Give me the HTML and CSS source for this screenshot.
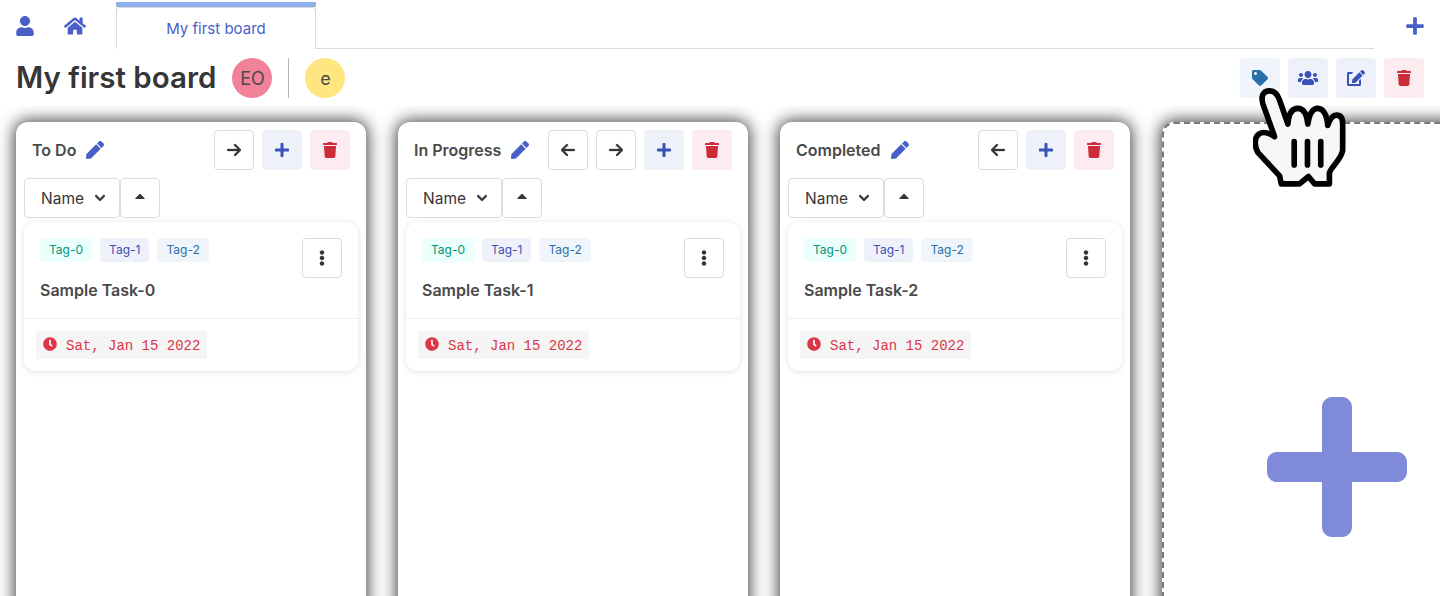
FILE: index.html
```html
<!DOCTYPE html>
<html lang="en">

<head>
    <meta charset="UTF-8">
    <meta name="viewport" content="width=device-width, initial-scale=1.0">
    <title>My first board</title>
    <link rel="stylesheet" href="styles.css">
</head>

<body>
    <svg class="defs" aria-hidden="true">
        <symbol id="i-user" viewBox="0 0 448 512"><path d="M224 256c70.7 0 128-57.3 128-128S294.7 0 224 0 96 57.3 96 128s57.3 128 128 128zm89.6 32h-16.7c-22.2 10.2-46.9 16-72.9 16s-50.6-5.8-72.9-16h-16.7C60.2 288 0 348.2 0 422.4V464c0 26.5 21.5 48 48 48h352c26.5 0 48-21.5 48-48v-41.6c0-74.2-60.2-134.4-134.4-134.4z"/></symbol>
        <symbol id="i-home" viewBox="0 0 576 512"><path d="M280.37 148.26L96 300.11V464a16 16 0 0 0 16 16l112.06-.29a16 16 0 0 0 15.92-16V368a16 16 0 0 1 16-16h64a16 16 0 0 1 16 16v95.64a16 16 0 0 0 16 16.05L464 480a16 16 0 0 0 16-16V300L295.67 148.26a12.19 12.19 0 0 0-15.3 0zM571.6 251.47L488 182.56V44.05a12 12 0 0 0-12-12h-56a12 12 0 0 0-12 12v72.61L318.47 43a48 48 0 0 0-61 0L4.34 251.47a12 12 0 0 0-1.6 16.9l25.5 31A12 12 0 0 0 45.15 301l235.22-193.74a12.19 12.19 0 0 1 15.3 0L530.9 301a12 12 0 0 0 16.9-1.6l25.5-31a12 12 0 0 0-1.7-16.93z"/></symbol>
        <symbol id="i-plus" viewBox="0 0 448 512"><path d="M416 208H272V64c0-17.67-14.33-32-32-32h-32c-17.67 0-32 14.33-32 32v144H32c-17.67 0-32 14.33-32 32v32c0 17.67 14.33 32 32 32h144v144c0 17.67 14.33 32 32 32h32c17.67 0 32-14.33 32-32V304h144c17.67 0 32-14.33 32-32v-32c0-17.67-14.33-32-32-32z"/></symbol>
        <symbol id="i-tag" viewBox="0 0 512 512"><path d="M0 252.118V48C0 21.49 21.49 0 48 0h204.118a48 48 0 0 1 33.941 14.059l211.882 211.882c18.745 18.745 18.745 49.137 0 67.882L293.823 497.941c-18.745 18.745-49.137 18.745-67.882 0L14.059 286.059A48 48 0 0 1 0 252.118zM112 64c-26.51 0-48 21.49-48 48s21.49 48 48 48 48-21.49 48-48-21.49-48-48-48z"/></symbol>
        <symbol id="i-users" viewBox="0 0 640 512"><path d="M96 224c35.3 0 64-28.7 64-64s-28.7-64-64-64-64 28.7-64 64 28.7 64 64 64zm448 0c35.3 0 64-28.7 64-64s-28.7-64-64-64-64 28.7-64 64 28.7 64 64 64zm32 32h-64c-17.6 0-33.5 7.1-45.1 18.6 40.3 22.1 68.9 62 75.1 109.4h66c17.7 0 32-14.3 32-32v-32c0-35.3-28.7-64-64-64zm-256 0c61.9 0 112-50.1 112-112S381.9 32 320 32 208 82.1 208 144s50.1 112 112 112zm76.8 32h-8.3c-20.8 10-43.9 16-68.5 16s-47.6-6-68.5-16h-8.3C179.6 288 128 339.6 128 403.2V432c0 26.5 21.5 48 48 48h288c26.5 0 48-21.5 48-48v-28.8c0-63.6-51.6-115.2-115.2-115.2zm-223.7-13.4C161.5 263.1 145.6 256 128 256H64c-35.3 0-64 28.7-64 64v32c0 17.7 14.3 32 32 32h65.9c6.3-47.4 34.9-87.3 75.2-109.4z"/></symbol>
        <symbol id="i-edit" viewBox="0 0 576 512"><path d="M402.6 83.2l90.2 90.2c3.8 3.8 3.8 10 0 13.8L274.4 405.6l-92.8 10.3c-12.4 1.4-22.9-9.1-21.5-21.5l10.3-92.8L388.8 83.2c3.8-3.8 10-3.8 13.8 0zm162-22.9l-48.8-48.8c-15.2-15.2-39.9-15.2-55.2 0l-35.4 35.4c-3.8 3.8-3.8 10 0 13.8l90.2 90.2c3.8 3.8 10 3.8 13.8 0l35.4-35.4c15.2-15.3 15.2-40 0-55.2zM384 346.2V448H64V128h73.1c3.2 0 6.2-1.3 8.5-3.5l40-40c7.6-7.6 2.2-20.5-8.5-20.5H48C21.5 64 0 85.5 0 112v352c0 26.5 21.5 48 48 48h352c26.5 0 48-21.5 48-48V306.2c0-10.7-12.9-16-20.5-8.5l-40 40c-2.2 2.3-3.5 5.3-3.5 8.5z"/></symbol>
        <symbol id="i-trash" viewBox="0 0 448 512"><path d="M432 32H312l-9.4-18.7A24 24 0 0 0 281.1 0H166.8a23.72 23.72 0 0 0-21.4 13.3L136 32H16A16 16 0 0 0 0 48v32a16 16 0 0 0 16 16h416a16 16 0 0 0 16-16V48a16 16 0 0 0-16-16zM53.2 467a48 48 0 0 0 47.9 45h245.8a48 48 0 0 0 47.9-45L416 128H32z"/></symbol>
        <symbol id="i-pen" viewBox="0 0 512 512"><path d="M290.74 93.24l128.02 128.02-277.99 277.99-114.14 12.6C11.35 513.54-1.56 500.62.14 485.34l12.7-114.22 277.9-277.88zm207.2-19.06l-60.11-60.11c-18.75-18.75-49.16-18.75-67.91 0l-56.55 56.55 128.02 128.02 56.55-56.55c18.75-18.76 18.75-49.16 0-67.91z"/></symbol>
        <symbol id="i-right" viewBox="0 0 448 512"><path d="M438.6 278.6c12.5-12.5 12.5-32.8 0-45.3l-160-160c-12.5-12.5-32.8-12.5-45.3 0s-12.5 32.8 0 45.3L338.8 224 32 224c-17.7 0-32 14.3-32 32s14.3 32 32 32l306.7 0L233.4 393.4c-12.5 12.5-12.5 32.8 0 45.3s32.8 12.5 45.3 0l160-160z"/></symbol>
        <symbol id="i-left" viewBox="0 0 448 512"><path d="M9.4 233.4c-12.5 12.5-12.5 32.8 0 45.3l160 160c12.5 12.5 32.8 12.5 45.3 0s12.5-32.8 0-45.3L109.2 288 416 288c17.7 0 32-14.3 32-32s-14.3-32-32-32l-306.7 0L214.6 118.6c12.5-12.5 12.5-32.8 0-45.3s-32.8-12.5-45.3 0l-160 160z"/></symbol>
        <symbol id="i-chevron" viewBox="0 0 448 512"><path d="M207.029 381.476L12.686 187.132c-9.373-9.373-9.373-24.569 0-33.941l22.667-22.667c9.357-9.357 24.522-9.375 33.901-.04L224 284.505l154.745-154.021c9.379-9.335 24.544-9.317 33.901.04l22.667 22.667c9.373 9.373 9.373 24.569 0 33.941L240.971 381.476c-9.373 9.372-24.569 9.372-33.942 0z"/></symbol>
        <symbol id="i-caret" viewBox="0 0 320 512"><path d="M288.662 352H31.338c-17.818 0-26.741-21.543-14.142-34.142l128.662-128.662c7.81-7.81 20.474-7.81 28.284 0l128.662 128.662c12.6 12.599 3.676 34.142-14.142 34.142z"/></symbol>
        <symbol id="i-dots" viewBox="0 0 192 512"><path d="M96 184c39.8 0 72 32.2 72 72s-32.2 72-72 72-72-32.2-72-72 32.2-72 72-72zM24 80c0 39.8 32.2 72 72 72s72-32.2 72-72S135.8 8 96 8 24 40.2 24 80zm0 352c0 39.8 32.2 72 72 72s72-32.2 72-72-32.2-72-72-72-72 32.2-72 72z"/></symbol>
        <symbol id="i-clock" viewBox="0 0 512 512"><path d="M256,8C119,8,8,119,8,256S119,504,256,504,504,393,504,256,393,8,256,8Zm92.49,313h0l-20,25a16,16,0,0,1-22.49,2.5h0l-67-49.72a40,40,0,0,1-15-31.23V112a16,16,0,0,1,16-16h32a16,16,0,0,1,16,16V256l58,42.5A16,16,0,0,1,348.49,321Z"/></symbol>
    </svg>

    <nav class="topbar">
        <a class="nav-icon nav-user"><svg class="icon-user"><use href="#i-user"/></svg></a>
        <a class="nav-icon nav-home"><svg class="icon-home"><use href="#i-home"/></svg></a>
        <div class="tab-wrap">
            <div class="tab-bar"></div>
            <div class="tab">My first board</div>
        </div>
        <div class="tab-line"></div>
        <a class="nav-icon nav-add"><svg class="icon-user"><use href="#i-plus"/></svg></a>
    </nav>

    <header class="board-head">
        <h1 class="board-title">My first board</h1>
        <span class="avatar avatar-pink">EO</span>
        <span class="head-divider"></span>
        <span class="avatar avatar-yellow">e</span>
        <div class="board-actions">
            <button class="btn btn-info"><svg class="ico-16"><use href="#i-tag"/></svg></button>
            <button class="btn btn-link"><svg class="ico-20"><use href="#i-users"/></svg></button>
            <button class="btn btn-link"><svg class="ico-18"><use href="#i-edit"/></svg></button>
            <button class="btn btn-danger"><svg class="ico-14"><use href="#i-trash"/></svg></button>
        </div>
    </header>

    <main class="board">
        <section class="column">
            <div class="column-head">
                <span class="column-name">To Do</span>
                <svg class="column-pencil"><use href="#i-pen"/></svg>
                <div class="column-actions">
                    <button class="btn btn-plain"><svg class="ico-arrow"><use href="#i-right"/></svg></button>
                    <button class="btn btn-link"><svg class="ico-14"><use href="#i-plus"/></svg></button>
                    <button class="btn btn-danger"><svg class="ico-14"><use href="#i-trash"/></svg></button>
                </div>
            </div>
            <div class="sort-row">
                <div class="sort-select">Name <svg class="sort-chevron"><use href="#i-chevron"/></svg></div>
                <button class="btn btn-plain btn-sort"><svg class="ico-caret"><use href="#i-caret"/></svg></button>
            </div>
            <article class="card">
                <div class="card-body">
                    <div class="card-main">
                        <div class="tags">
                            <span class="tag tag-green">Tag-0</span>
                            <span class="tag tag-blue">Tag-1</span>
                            <span class="tag tag-sky">Tag-2</span>
                        </div>
                        <div class="card-title">Sample Task-0</div>
                    </div>
                    <button class="btn btn-plain"><svg class="ico-dots"><use href="#i-dots"/></svg></button>
                </div>
                <div class="card-foot">
                    <span class="due"><svg class="due-clock"><use href="#i-clock"/></svg>Sat, Jan 15 2022</span>
                </div>
            </article>
        </section>

        <section class="column">
            <div class="column-head">
                <span class="column-name">In Progress</span>
                <svg class="column-pencil"><use href="#i-pen"/></svg>
                <div class="column-actions">
                    <button class="btn btn-plain"><svg class="ico-arrow"><use href="#i-left"/></svg></button>
                    <button class="btn btn-plain"><svg class="ico-arrow"><use href="#i-right"/></svg></button>
                    <button class="btn btn-link"><svg class="ico-14"><use href="#i-plus"/></svg></button>
                    <button class="btn btn-danger"><svg class="ico-14"><use href="#i-trash"/></svg></button>
                </div>
            </div>
            <div class="sort-row">
                <div class="sort-select">Name <svg class="sort-chevron"><use href="#i-chevron"/></svg></div>
                <button class="btn btn-plain btn-sort"><svg class="ico-caret"><use href="#i-caret"/></svg></button>
            </div>
            <article class="card">
                <div class="card-body">
                    <div class="card-main">
                        <div class="tags">
                            <span class="tag tag-green">Tag-0</span>
                            <span class="tag tag-blue">Tag-1</span>
                            <span class="tag tag-sky">Tag-2</span>
                        </div>
                        <div class="card-title">Sample Task-1</div>
                    </div>
                    <button class="btn btn-plain"><svg class="ico-dots"><use href="#i-dots"/></svg></button>
                </div>
                <div class="card-foot">
                    <span class="due"><svg class="due-clock"><use href="#i-clock"/></svg>Sat, Jan 15 2022</span>
                </div>
            </article>
        </section>

        <section class="column">
            <div class="column-head">
                <span class="column-name">Completed</span>
                <svg class="column-pencil"><use href="#i-pen"/></svg>
                <div class="column-actions">
                    <button class="btn btn-plain"><svg class="ico-arrow"><use href="#i-left"/></svg></button>
                    <button class="btn btn-link"><svg class="ico-14"><use href="#i-plus"/></svg></button>
                    <button class="btn btn-danger"><svg class="ico-14"><use href="#i-trash"/></svg></button>
                </div>
            </div>
            <div class="sort-row">
                <div class="sort-select">Name <svg class="sort-chevron"><use href="#i-chevron"/></svg></div>
                <button class="btn btn-plain btn-sort"><svg class="ico-caret"><use href="#i-caret"/></svg></button>
            </div>
            <article class="card">
                <div class="card-body">
                    <div class="card-main">
                        <div class="tags">
                            <span class="tag tag-green">Tag-0</span>
                            <span class="tag tag-blue">Tag-1</span>
                            <span class="tag tag-sky">Tag-2</span>
                        </div>
                        <div class="card-title">Sample Task-2</div>
                    </div>
                    <button class="btn btn-plain"><svg class="ico-dots"><use href="#i-dots"/></svg></button>
                </div>
                <div class="card-foot">
                    <span class="due"><svg class="due-clock"><use href="#i-clock"/></svg>Sat, Jan 15 2022</span>
                </div>
            </article>
        </section>

        <section class="column column-new">
            <svg class="big-plus"><use href="#i-plus"/></svg>
        </section>
    </main>

    <!-- pointer cursor caught in the capture -->
    <svg class="hand" viewBox="160 258 280 306">
        <path d="M225 410 L190 312 C183 288 190 272 210 272 C225 272 235 285 240 300 L265 372 C268 335 280 325 295 325 C312 325 322 345 325 372 C330 340 340 325 355 325 C372 325 383 345 385 376 C392 355 402 345 412 345 C425 345 430 355 430 372 L430 452 C425 480 392 505 390 520 L390 552 L345 552 L327 530 L300 552 L245 552 L240 528 L175 458 C162 435 165 410 178 402 C192 392 210 400 225 410 Z"/>
        <path class="hand-line" d="M284 425 V495 M324 425 V495 M364 425 V495"/>
    </svg>
</body>

</html>
```

FILE: styles.css
```css
html,
body {
    height: 100%;
}

body {
    font-family: 'Inter', sans-serif;
    color: #363636;
    background-color: #fff;
    margin: 0;
    overflow: hidden;
    position: relative;
    display: flex;
    flex-direction: column;
}

.defs {
    display: none;
}

svg {
    fill: currentColor;
    display: block;
}

/* top tabs */
.topbar {
    display: flex;
    align-items: stretch;
    flex: none;
    height: 49px;
    color: #485fc7;
}

.nav-icon {
    display: flex;
    align-items: center;
    padding-top: 3px;
}

.nav-user {
    margin-left: 16px;
}

.nav-home {
    margin-left: 30px;
}

.nav-add {
    width: 66px;
    box-sizing: border-box;
    padding-left: 32px;
}

.icon-user {
    width: 18px;
    height: 20px;
}

.icon-home {
    width: 22px;
    height: 20px;
}

.tab-wrap {
    margin-left: 30px;
    width: 200px;
    padding-top: 2px;
    box-sizing: border-box;
}

.tab-bar {
    height: 5px;
    background-color: #8fb0ec;
}

.tab {
    height: 42px;
    box-sizing: border-box;
    border: 1px solid #dbdbdb;
    border-bottom: none;
    border-radius: 4px 4px 0 0;
    display: flex;
    align-items: center;
    justify-content: center;
    font-size: 15px;
}

.tab-line {
    flex: 1;
    border-bottom: 1px solid #dbdbdb;
}

/* board header */
.board-head {
    display: flex;
    align-items: center;
    flex: none;
    height: 40px;
    margin-top: 9px;
    padding: 0 16px;
}

.board-title {
    font-size: 29.5px;
    font-weight: 600;
    line-height: 40px;
    margin: 0 16px 0 0;
    padding-bottom: 2px;
}

.avatar {
    width: 40px;
    height: 40px;
    border-radius: 50%;
    display: flex;
    align-items: center;
    justify-content: center;
    font-size: 18px;
    color: #4a4a4a;
}

.avatar-pink {
    background-color: #f1829a;
}

.avatar-yellow {
    background-color: #ffe680;
}

.head-divider {
    width: 1px;
    height: 40px;
    background-color: #b5b5b5;
    margin: 0 16px;
}

.board-actions {
    margin-left: auto;
    display: flex;
    gap: 8px;
}

/* buttons */
.btn {
    width: 40px;
    height: 40px;
    padding: 0;
    border: 1px solid transparent;
    border-radius: 4px;
    display: flex;
    align-items: center;
    justify-content: center;
    flex: none;
    cursor: pointer;
    box-sizing: border-box;
}

.btn-plain {
    background-color: #fff;
    border-color: #dbdbdb;
    color: #363636;
}

.btn-info {
    background-color: #eff5fb;
    color: #296fa8;
}

.btn-link {
    background-color: #eff1fa;
    color: #3850b7;
}

.btn-danger {
    background-color: #fcebef;
    color: #cc2b38;
}

.ico-14 {
    width: 14px;
    height: 16px;
}

.ico-arrow {
    width: 14px;
    height: 16px;
    stroke: currentColor;
    stroke-width: 10;
}

.ico-16 {
    width: 16px;
    height: 16px;
}

.ico-18 {
    width: 18px;
    height: 16px;
}

.ico-20 {
    width: 20px;
    height: 16px;
}

.ico-dots {
    width: 6px;
    height: 16px;
}

.ico-caret {
    width: 10px;
    height: 16px;
    margin-top: -5px;
}

/* columns */
.board {
    flex: 1;
    min-height: 0;
    overflow: hidden;
    display: flex;
    gap: 32px;
    margin-top: 8px;
    padding: 16px 16px 0;
}

.column {
    flex: none;
    width: 350px;
    height: 690px;
    box-sizing: border-box;
    background-color: #fff;
    border-radius: 12px;
    padding: 8px;
    box-shadow: 0 0 16px 2px rgba(0, 0, 0, 0.72);
}

.column-head {
    display: flex;
    align-items: center;
    height: 40px;
    padding: 0 8px;
}

.column-name {
    font-size: 16px;
    font-weight: 600;
    color: #4a4a4a;
}

.column-pencil {
    width: 18px;
    height: 18px;
    margin-left: 10px;
    color: #485fc7;
}

.column-actions {
    margin-left: auto;
    display: flex;
    gap: 8px;
}

.sort-row {
    display: flex;
    margin-top: 8px;
}

.sort-select {
    width: 96px;
    height: 40px;
    box-sizing: border-box;
    border: 1px solid #dbdbdb;
    border-radius: 4px;
    display: flex;
    align-items: center;
    justify-content: space-between;
    padding: 0 14px 0 16px;
    font-size: 15.5px;
}

.sort-chevron {
    width: 10px;
    height: 12px;
    stroke: currentColor;
    stroke-width: 36;
}

/* task card */
.card {
    margin-top: 4px;
    border-radius: 12px;
    background-color: #fff;
    box-shadow: 0 1px 6px rgba(10, 10, 10, 0.12);
}

.card-body {
    display: flex;
    justify-content: space-between;
    padding: 16px;
    height: 97px;
    box-sizing: border-box;
    border-bottom: 1px solid #ededed;
}

.tags {
    display: flex;
    gap: 8px;
}

.tag {
    height: 24px;
    padding: 0 9px;
    border-radius: 4px;
    font-size: 12px;
    line-height: 24px;
}

.tag-green {
    background-color: #ebfffc;
    color: #00947e;
}

.tag-blue {
    background-color: #eff1fa;
    color: #3850b7;
}

.tag-sky {
    background-color: #eff5fb;
    color: #296fa8;
}

.card-title {
    margin-top: 16px;
    font-size: 16px;
    font-weight: 600;
    line-height: 24px;
    color: #4a4a4a;
}

.card-foot {
    height: 52px;
    padding: 12px;
    box-sizing: border-box;
}

.due {
    display: inline-flex;
    align-items: center;
    height: 28px;
    box-sizing: border-box;
    padding: 2px 7px 0;
    gap: 9px;
    background-color: #f5f5f5;
    font-family: 'Liberation Mono', monospace;
    font-size: 14px;
    color: #dc3545;
}

.due-clock {
    width: 14px;
    height: 14px;
    margin-top: -4px;
}

/* add column placeholder */
.column-new {
    border: 2px dashed #7a7a7a;
    display: flex;
    align-items: center;
    justify-content: center;
    padding: 0;
}

.big-plus {
    width: 140px;
    height: 160px;
    color: #7f8bd9;
}

/* cursor overlay */
.hand {
    position: absolute;
    left: 1253px;
    top: 86px;
    width: 93px;
    height: 102px;
    fill: #f7f7f7;
    stroke: #000;
    stroke-width: 17;
    stroke-linejoin: round;
}

.hand-line {
    fill: none;
    stroke-linecap: round;
}
```
